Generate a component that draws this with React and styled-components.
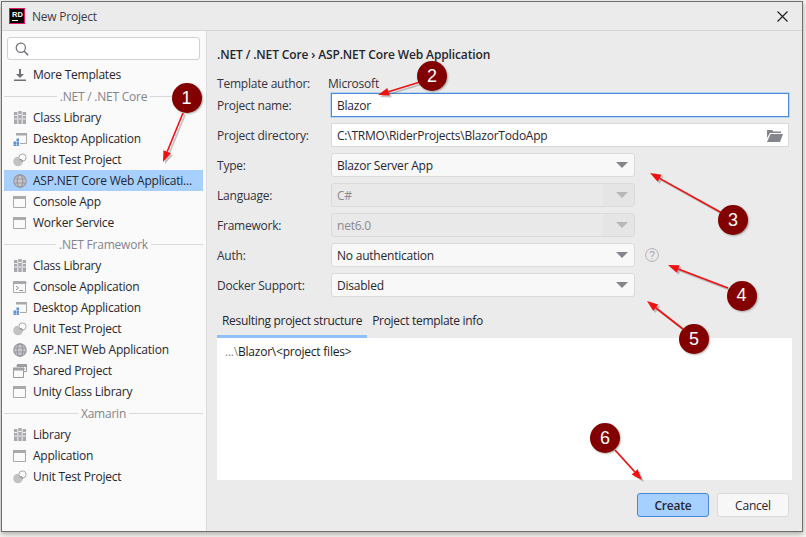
import React from "react";
import styled, { createGlobalStyle } from "styled-components";

const Global = createGlobalStyle`
  html, body { margin: 0; padding: 0; background: #f4f3ef; }
  body { width: 806px; height: 537px; overflow: hidden; position: relative; font-family: "Open Sans", "Noto Sans", sans-serif; }
`;

const Stage = styled.div`
  position: relative;
  width: 806px;
  height: 537px;
  padding: 1px 0 0 1px;
  box-sizing: border-box;
`;
const Win = styled.div`
  width: 802px;
  height: 531px;
  box-sizing: border-box;
  border: 1px solid #6f6f6f;
  background: #ebebeb;
  display: flex;
  flex-direction: column;
  box-shadow: 0 2px 5px rgba(0,0,0,.3);
  color: #262630;
  font-size: 12px;
  letter-spacing: -0.22px;
`;
const TitleBar = styled.div`
  height: 28px;
  flex: none;
  border-bottom: 1px solid #d6d6d6;
  display: flex;
  align-items: center;
  padding: 0 14px 0 7px;
  gap: 7px;
`;
const Logo = styled.div`
  width: 16px;
  height: 16px;
  background: #000;
  border: 1px solid #e0185f;
  color: #fff;
  font: bold 7.5px/9px "Liberation Sans", sans-serif;
  letter-spacing: 0;
  padding-left: 2px;
  padding-top: 1px;
  box-sizing: border-box;
  &::after { content: ""; display: block; width: 6px; height: 1px; background: #fff; margin-top: 1px; }
`;
const Title = styled.span`
  flex: 1;
  color: #3c3c46;
`;
const Body = styled.div`
  flex: 1;
  display: flex;
  min-height: 0;
`;
const Side = styled.div`
  width: 205px;
  flex: none;
  box-sizing: border-box;
  background: #fafafa;
  border-right: 1px solid #dcdcdc;
  padding: 6px 3px 0 2px;
`;
const Search = styled.div`
  height: 23px;
  margin: 0 3px 4px 3px;
  box-sizing: border-box;
  border: 1px solid #d2d2d2;
  border-radius: 3px;
  background: #fff;
  display: flex;
  align-items: center;
  padding-left: 7px;
`;
const Row = styled.div`
  height: 21px;
  display: flex;
  align-items: center;
  padding-left: 9px;
  gap: 6px;
  white-space: nowrap;
  background: ${(p) => (p.$selected ? "#a7d0ff" : "transparent")};
  svg { flex: none; }
`;
const Group = styled.div`
  height: 22px;
  display: flex;
  align-items: center;
  gap: 3px;
  color: #84848c;
  &::before, &::after { content: ""; flex: 1; height: 1px; background: #d8d8d8; }
`;
const Main = styled.div`
  flex: 1;
  min-width: 0;
  padding: 16px 13px 0 10px;
  display: flex;
  flex-direction: column;
`;
const Heading = styled.div`
  height: 16px;
  line-height: 16px;
  font-weight: 600;
  letter-spacing: -0.13px;
  margin-bottom: 11px;
`;
const AuthorRow = styled.div`
  height: 18px;
  display: grid;
  grid-template-columns: 111px 1fr;
  align-items: center;
  margin-bottom: 1px;
`;
const Form = styled.div`
  display: grid;
  grid-template-columns: 114px 458px;
  grid-auto-rows: 24px;
  row-gap: 6px;
  align-items: center;
`;
const Label = styled.span`
  color: #333340;
`;
const TextInput = styled.div`
  height: 24px;
  box-sizing: border-box;
  background: #fff;
  display: flex;
  align-items: center;
  justify-content: space-between;
  padding: 0 5px;
  border: 1px solid ${(p) => (p.$focus ? "#4a8ad4" : "#d9d9d9")};
  box-shadow: ${(p) => (p.$focus ? "0 0 0 1px #b9d6f5" : "none")};
`;
const ComboCell = styled.div`
  display: flex;
  align-items: center;
  gap: 10px;
`;
const Combo = styled.div`
  width: 304px;
  height: 24px;
  box-sizing: border-box;
  border: 1px solid #dadada;
  border-radius: 3px;
  background: ${(p) => (p.$disabled ? "#e9e9e9" : "#f8f8f8")};
  color: ${(p) => (p.$disabled ? "#8a8a90" : "inherit")};
  display: flex;
  align-items: center;
  padding-left: 5px;
  position: relative;
`;
const ComboText = styled.span` flex: 1; `;
const Caret = styled.span`
  width: 31px;
  height: 22px;
  display: flex;
  align-items: center;
  justify-content: center;
  background: ${(p) => (p.$disabled ? "#e5e5e5" : "transparent")};
  &::after {
    content: "";
    border-left: 6px solid transparent;
    border-right: 6px solid transparent;
    border-top: 6px solid ${(p) => (p.$disabled ? "#b8b8bc" : "#85858d")};
    margin-left: 7px;
  }
`;
const Tabs = styled.div`
  margin-top: 13px;
  height: 28px;
  display: flex;
  width: 575px;
`;
const Tab = styled.div`
  height: 25px;
  line-height: 22px;
  padding: 0 5px;
  letter-spacing: -0.3px;
  border-bottom: 3px solid ${(p) => (p.$active ? "#8fc0fa" : "transparent")};
`;
const Output = styled.div`
  width: 575px;
  height: 142px;
  box-sizing: border-box;
  background: #fff;
  padding: 6px 8px;
  color: #1a1a1a;
  line-height: 16px;
`;
const Dim = styled.span` color: #8c8c8c; `;
const Buttons = styled.div`
  display: flex;
  justify-content: flex-end;
  gap: 8px;
  margin-top: 13px;
  width: 572px;
`;
const Btn = styled.div`
  width: 72px;
  height: 24px;
  box-sizing: border-box;
  border-radius: 3px;
  display: flex;
  align-items: center;
  justify-content: center;
  background: ${(p) => (p.$primary ? "#a6d0ff" : "#f7f7f7")};
  border: 1px solid ${(p) => (p.$primary ? "#4a8ad4" : "#dadada")};
  font-weight: ${(p) => (p.$primary ? 600 : 400)};
`;
const Overlay = styled.svg`
  position: absolute;
  left: 0;
  top: 0;
  pointer-events: none;
`;
const Badge = styled.div`
  position: absolute;
  left: ${(p) => p.$x - 15}px;
  top: ${(p) => p.$y - 15}px;
  width: 30px;
  height: 30px;
  border-radius: 50%;
  background: #820000;
  color: #fff;
  box-shadow: 1px 1px 2px rgba(0,0,0,.3);
  display: flex;
  align-items: center;
  justify-content: center;
  font: 18px "Liberation Sans", sans-serif;
`;

const G = "#a9a9ad";
const IcoLib = () => (
  <svg width="14" height="14" viewBox="0 0 14 14">
    <path d="M1 1h3.4v12H1zM5.3 0h3.4v13H5.3zM9.6 1H13v12H9.6z" fill={G} />
    <path d="M1.5 4.5h2.4M1.5 8h2.4M5.8 3.5h2.4M5.8 8h2.4M10.1 4.5h2.4M10.1 8h2.4" stroke="#fafafa" />
  </svg>
);
const IcoDesk = () => (
  <svg width="14" height="14" viewBox="0 0 14 14">
    <path d="M3.5 1.5h10v10H7" fill="none" stroke={G} />
    <path d="M3 1h11v2.5H3z" fill={G} />
    <path d="M3.5 6.5H6V9H3.5zM.5 9.5H3V12H.5zM3.5 9.5H6V12H3.5zM.5 12.2H3V14H.5zM3.5 12.2H6V14H3.5z" fill="#5d8fd6" />
  </svg>
);
const IcoTest = () => (
  <svg width="14" height="14" viewBox="0 0 14 14">
    <circle cx="5" cy="8.5" r="4.8" fill="#c2c2c4" />
    <circle cx="9.5" cy="4.5" r="3.6" fill="#fafafa" stroke={G} />
    <path d="M7 6.5a2 2 0 0 1 2.5 2.5" fill="none" stroke="#8f8f93" />
  </svg>
);
const IcoGlobe = () => (
  <svg width="14" height="14" viewBox="0 0 14 14" fill="none" stroke="#97979d" strokeWidth="1.2">
    <circle cx="7" cy="7" r="6.2" fill="#c8c8cc" />
    <ellipse cx="7" cy="7" rx="2.8" ry="6.2" />
    <path d="M1 5h12M1 9h12" />
  </svg>
);
const IcoWin = () => (
  <svg width="14" height="14" viewBox="0 0 14 14">
    <path d="M.5 1.5h12v11H.5z" fill="none" stroke={G} />
    <path d="M0 1h13v3H0z" fill={G} />
  </svg>
);
const IcoCon = () => (
  <svg width="14" height="14" viewBox="0 0 14 14" fill="none" stroke={G}>
    <path d="M.5 1.5h12v11H.5z" />
    <path d="M0 2h13v1.5H0z" fill={G} />
    <path d="M3 6l2.5 2L3 10M6.5 10.5H10" stroke="#8f8f93" />
  </svg>
);
const IcoShared = () => (
  <svg width="14" height="14" viewBox="0 0 14 14" fill="none" stroke="#9a9a9e">
    <path d="M4.5 3V.5h9v7H11" />
    <path d="M4 1h9v1.5H4z" fill={G} />
    <path d="M.5 4.5h10v9H.5z" />
    <path d="M0 4h11v2H0z" fill={G} />
  </svg>
);
const IcoSearch = () => (
  <svg width="14" height="14" viewBox="0 0 14 14" fill="none" stroke="#6e6e76" strokeWidth="1.2">
    <circle cx="5.8" cy="5.8" r="4.6" />
    <path d="M9.2 9.2l4 4" strokeWidth="1.5" />
  </svg>
);
const IcoMore = () => (
  <svg width="14" height="14" viewBox="0 0 14 14" fill="#6e6e76">
    <path d="M6 1h2v5h3L7 10 3 6h3zM1 11.5h12V13H1z" />
  </svg>
);
const IcoFolder = () => (
  <svg width="16" height="13" viewBox="0 0 16 13" fill="#85858d">
    <path d="M0 1h5l1.5 1.5H14V4H3L0 9z" />
    <path d="M3.5 5H16l-3 8H0z" />
  </svg>
);
const IcoHelp = () => (
  <svg width="14" height="14" viewBox="0 0 14 14" fill="none">
    <circle cx="7" cy="7" r="6.4" stroke="#b0b0b4" />
    <text x="7" y="10.5" textAnchor="middle" fontSize="10" fontFamily="Liberation Sans" fill="#a0a0a4">?</text>
  </svg>
);

const coreItems = [
  [IcoLib, "Class Library"],
  [IcoDesk, "Desktop Application"],
  [IcoTest, "Unit Test Project"],
  [IcoGlobe, "ASP.NET Core Web Applicati...", true],
  [IcoWin, "Console App"],
  [IcoWin, "Worker Service"],
];
const fwItems = [
  [IcoLib, "Class Library"],
  [IcoCon, "Console Application"],
  [IcoDesk, "Desktop Application"],
  [IcoTest, "Unit Test Project"],
  [IcoGlobe, "ASP.NET Web Application"],
  [IcoShared, "Shared Project"],
  [IcoWin, "Unity Class Library"],
];
const xamItems = [
  [IcoLib, "Library"],
  [IcoWin, "Application"],
  [IcoTest, "Unit Test Project"],
];

const Items = ({ list }) =>
  list.map(([Icon, text, sel]) => (
    <Row key={text} $selected={sel}>
      <Icon />
      <span>{text}</span>
    </Row>
  ));

const arrows = [
  [183, 113, 163, 162],
  [420, 82, 378, 95],
  [722, 213, 650, 173],
  [728, 288, 668, 265],
  [683, 329, 647, 301],
  [615, 450, 642, 480],
];
const badges = [
  [186.5, 98, "1"],
  [432, 76, "2"],
  [733, 220, "3"],
  [741.5, 295.5, "4"],
  [694, 339, "5"],
  [605, 438, "6"],
];

const Arrow = ({ a, color, dx = 0, dy = 0 }) => {
  const [x1, y1, x2, y2] = a;
  const ang = Math.atan2(y2 - y1, x2 - x1);
  const len = 11, w = 4;
  const bx = x2 - len * Math.cos(ang), by = y2 - len * Math.sin(ang);
  const px = -Math.sin(ang) * w, py = Math.cos(ang) * w;
  return (
    <g transform={`translate(${dx} ${dy})`}>
      <line x1={x1} y1={y1} x2={bx} y2={by} stroke={color} strokeWidth="1.6" />
      <polygon points={`${x2},${y2} ${bx + px},${by + py} ${bx - px},${by - py}`} fill={color} />
    </g>
  );
};

export default function App() {
  return (
    <Stage>
      <Global />
      <Win>
        <TitleBar>
          <Logo>RD</Logo>
          <Title>New Project</Title>
          <svg width="11" height="11" viewBox="0 0 11 11" stroke="#222" strokeWidth="1.2">
            <path d="M.5.5l10 10M10.5.5l-10 10" />
          </svg>
        </TitleBar>
        <Body>
          <Side>
            <Search><IcoSearch /></Search>
            <Row><IcoMore /><span>More Templates</span></Row>
            <Group>.NET / .NET Core</Group>
            <Items list={coreItems} />
            <Group>.NET Framework</Group>
            <Items list={fwItems} />
            <Group>Xamarin</Group>
            <Items list={xamItems} />
          </Side>
          <Main>
            <Heading>.NET / .NET Core › ASP.NET Core Web Application</Heading>
            <AuthorRow>
              <Label>Template author:</Label>
              <Label>Microsoft</Label>
            </AuthorRow>
            <Form>
              <Label>Project name:</Label>
              <TextInput $focus>Blazor</TextInput>
              <Label>Project directory:</Label>
              <TextInput>C:\TRMO\RiderProjects\BlazorTodoApp<IcoFolder /></TextInput>
              <Label>Type:</Label>
              <ComboCell><Combo><ComboText>Blazor Server App</ComboText><Caret /></Combo></ComboCell>
              <Label>Language:</Label>
              <ComboCell><Combo $disabled><ComboText>C#</ComboText><Caret $disabled /></Combo></ComboCell>
              <Label>Framework:</Label>
              <ComboCell><Combo $disabled><ComboText>net6.0</ComboText><Caret $disabled /></Combo></ComboCell>
              <Label>Auth:</Label>
              <ComboCell><Combo><ComboText>No authentication</ComboText><Caret /></Combo><IcoHelp /></ComboCell>
              <Label>Docker Support:</Label>
              <ComboCell><Combo><ComboText>Disabled</ComboText><Caret /></Combo></ComboCell>
            </Form>
            <Tabs>
              <Tab $active>Resulting project structure</Tab>
              <Tab>Project template info</Tab>
            </Tabs>
            <Output><Dim>...\</Dim>Blazor\&lt;project files&gt;</Output>
            <Buttons>
              <Btn $primary>Create</Btn>
              <Btn>Cancel</Btn>
            </Buttons>
          </Main>
        </Body>
      </Win>
      <Overlay width="806" height="537" viewBox="0 0 806 537">
        {arrows.map((a, i) => <Arrow key={"s" + i} a={a} color="rgba(90,90,90,.35)" dx={2} dy={2} />)}
        {arrows.map((a, i) => <Arrow key={"a" + i} a={a} color="#f01010" />)}
      </Overlay>
      {badges.map(([x, y, t]) => <Badge key={t} $x={x} $y={y}>{t}</Badge>)}
    </Stage>
  );
}
